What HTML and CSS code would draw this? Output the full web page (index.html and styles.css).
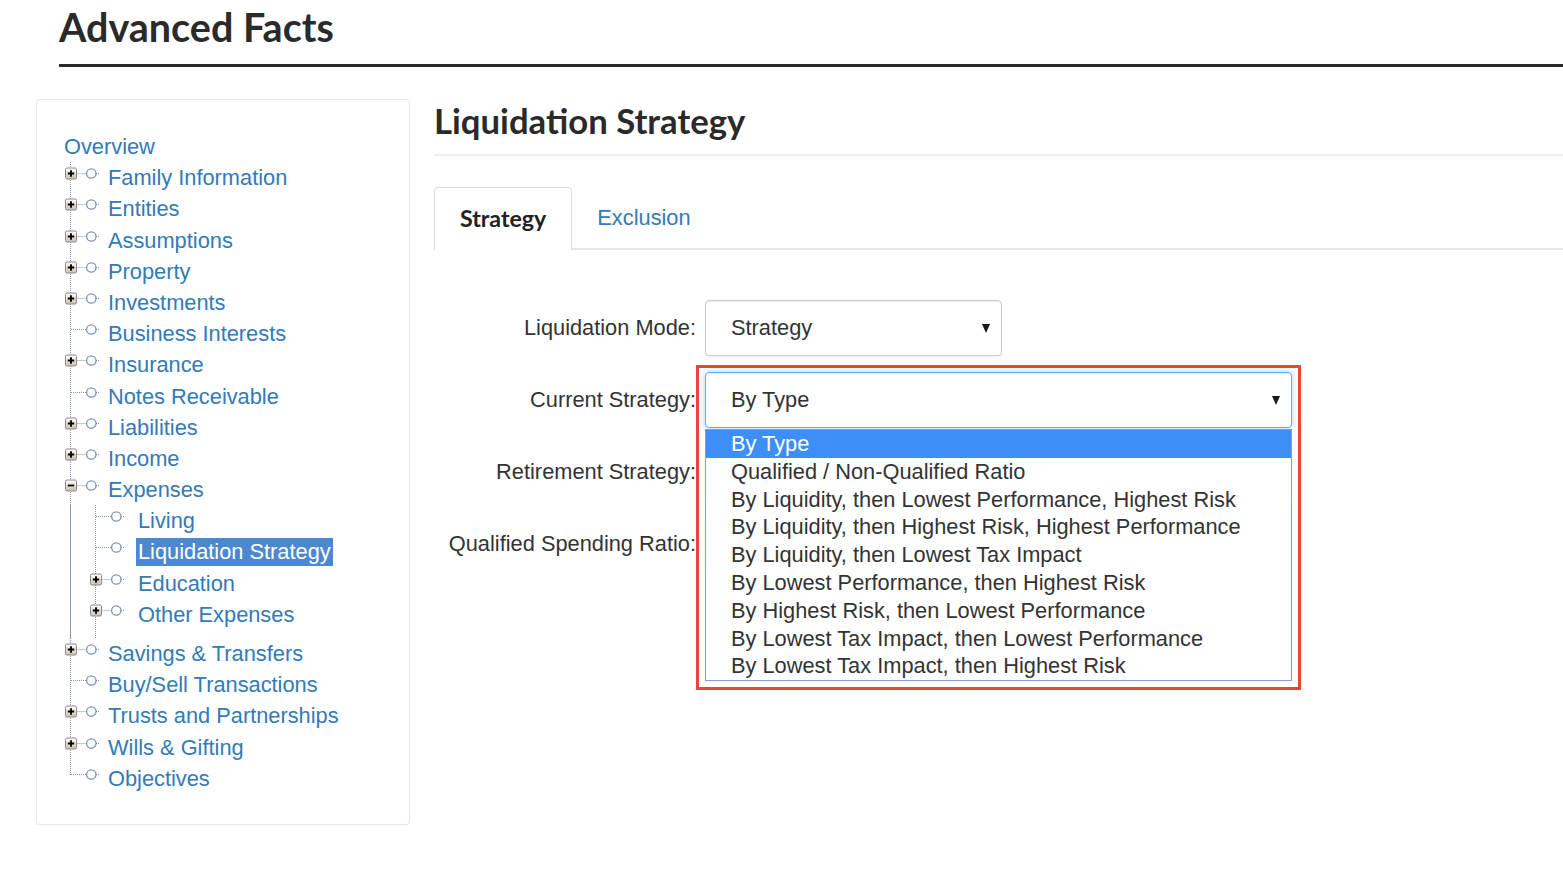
FILE: index.html
```html
<!DOCTYPE html>
<html lang="en">
<head>
  <meta charset="UTF-8" />
  <meta name="viewport" content="width=device-width, initial-scale=1" />
  <title>Advanced Facts - Liquidation Strategy</title>
  <link rel="stylesheet" href="styles.css">
</head>
<body>

<!-- tree glyphs, reused by every row -->
<svg class="defs" width="0" height="0" aria-hidden="true">
  <defs>
    <linearGradient id="box-fill" x1="0" y1="0" x2="0" y2="1">
      <stop offset="0" stop-color="#ffffff"/>
      <stop offset="1" stop-color="#c9c1b1"/>
    </linearGradient>
    <symbol id="t-plus" viewBox="0 0 43 31">
      <line x1="11.5" y1="11.5" x2="21" y2="11.5" class="dots"/>
      <line x1="31" y1="11.5" x2="35" y2="11.5" class="dots"/>
      <rect x="0.5" y="6" width="11" height="11" rx="1.5" fill="url(#box-fill)" stroke="#8a8a8a"/>
      <path d="M2.8 11.5h6.4M6 8.3v6.4" stroke="#000" stroke-width="1.8"/>
      <circle cx="26.3" cy="11.5" r="4.7" fill="#fff" stroke="#7f93b4" stroke-width="1.3"/>
    </symbol>
    <symbol id="t-minus" viewBox="0 0 43 31">
      <line x1="11.5" y1="11.5" x2="21" y2="11.5" class="dots"/>
      <line x1="31" y1="11.5" x2="35" y2="11.5" class="dots"/>
      <rect x="0.5" y="6" width="11" height="11" rx="1.5" fill="url(#box-fill)" stroke="#8a8a8a"/>
      <path d="M2.8 11.5h6.4" stroke="#000" stroke-width="1.8"/>
      <circle cx="26.3" cy="11.5" r="4.7" fill="#fff" stroke="#7f93b4" stroke-width="1.3"/>
    </symbol>
    <symbol id="t-leaf" viewBox="0 0 43 31">
      <line x1="6" y1="11.5" x2="21" y2="11.5" class="dots"/>
      <line x1="31" y1="11.5" x2="35" y2="11.5" class="dots"/>
      <circle cx="26.3" cy="11.5" r="4.7" fill="#fff" stroke="#7f93b4" stroke-width="1.3"/>
    </symbol>
  </defs>
</svg>

<header class="page-header">
  <h1>Advanced Facts</h1>
</header>

<div class="layout">
  <nav class="tree-panel">
    <a class="tree-root" href="#">Overview</a>
    <ul class="tree">
      <li><svg class="twig"><use href="#t-plus"/></svg><a href="#">Family Information</a></li>
      <li><svg class="twig"><use href="#t-plus"/></svg><a href="#">Entities</a></li>
      <li><svg class="twig"><use href="#t-plus"/></svg><a href="#">Assumptions</a></li>
      <li><svg class="twig"><use href="#t-plus"/></svg><a href="#">Property</a></li>
      <li><svg class="twig"><use href="#t-plus"/></svg><a href="#">Investments</a></li>
      <li><svg class="twig"><use href="#t-leaf"/></svg><a href="#">Business Interests</a></li>
      <li><svg class="twig"><use href="#t-plus"/></svg><a href="#">Insurance</a></li>
      <li><svg class="twig"><use href="#t-leaf"/></svg><a href="#">Notes Receivable</a></li>
      <li><svg class="twig"><use href="#t-plus"/></svg><a href="#">Liabilities</a></li>
      <li><svg class="twig"><use href="#t-plus"/></svg><a href="#">Income</a></li>
      <li><svg class="twig"><use href="#t-minus"/></svg><a href="#">Expenses</a></li>
      <li class="branch">
        <ul class="tree sub">
          <li><svg class="twig"><use href="#t-leaf"/></svg><a href="#">Living</a></li>
          <li><svg class="twig"><use href="#t-leaf"/></svg><a class="selected" href="#">Liquidation Strategy</a></li>
          <li><svg class="twig"><use href="#t-plus"/></svg><a href="#">Education</a></li>
          <li><svg class="twig"><use href="#t-plus"/></svg><a href="#">Other Expenses</a></li>
        </ul>
      </li>
      <li><svg class="twig"><use href="#t-plus"/></svg><a href="#">Savings &amp; Transfers</a></li>
      <li><svg class="twig"><use href="#t-leaf"/></svg><a href="#">Buy/Sell Transactions</a></li>
      <li><svg class="twig"><use href="#t-plus"/></svg><a href="#">Trusts and Partnerships</a></li>
      <li><svg class="twig"><use href="#t-plus"/></svg><a href="#">Wills &amp; Gifting</a></li>
      <li><svg class="twig"><use href="#t-leaf"/></svg><a href="#">Objectives</a></li>
    </ul>
  </nav>

  <main class="content">
    <h2 class="section-title">Liquidation Strategy</h2>

    <ul class="tabs">
      <li class="tab active">Strategy</li>
      <li class="tab"><a href="#">Exclusion</a></li>
    </ul>

    <div class="form">
      <label class="form-label">Liquidation Mode:</label>
      <div class="field">
        <div class="select short">Strategy<span class="caret"></span></div>
      </div>

      <label class="form-label">Current Strategy:</label>
      <div class="field">
        <div class="combo">
          <div class="select wide focused">By Type<span class="caret"></span></div>
          <ul class="options">
            <li class="hover">By Type</li>
            <li>Qualified / Non-Qualified Ratio</li>
            <li>By Liquidity, then Lowest Performance, Highest Risk</li>
            <li>By Liquidity, then Highest Risk, Highest Performance</li>
            <li>By Liquidity, then Lowest Tax Impact</li>
            <li>By Lowest Performance, then Highest Risk</li>
            <li>By Highest Risk, then Lowest Performance</li>
            <li>By Lowest Tax Impact, then Lowest Performance</li>
            <li>By Lowest Tax Impact, then Highest Risk</li>
          </ul>
          <div class="callout"></div>
        </div>
      </div>

      <!-- these two selects sit under the open list -->
      <label class="form-label">Retirement Strategy:</label>
      <div class="field">
        <div class="select wide"><span class="caret"></span></div>
      </div>

      <label class="form-label">Qualified Spending Ratio:</label>
      <div class="field">
        <div class="select short"><span class="caret"></span></div>
      </div>
    </div>
  </main>
</div>

</body>
</html>
```

FILE: styles.css
```css
body {
  margin: 0;
  font-family: "Liberation Sans", Arial, sans-serif;
  font-size: 21.8px;
  color: #333;
  background: #fff;
  overflow: hidden;
}
a {
  color: #337ab7;
  text-decoration: none;
}
.defs {
  position: absolute;
}
.dots {
  stroke: #8497b6;
  stroke-width: 1;
  stroke-dasharray: 1 1;
}

/* header */
.page-header {
  margin-left: 59px;
  border-bottom: 3px solid #2b2b2b;
  padding-bottom: 10px;
}
.page-header h1 {
  margin: 0;
  font-family: Lato, "Open Sans", sans-serif;
  font-weight: 700;
  font-size: 39.5px;
  line-height: 54px;
  color: #2a2a2a;
}

.layout {
  display: flex;
  align-items: flex-start;
  gap: 24px;
  padding-left: 36px;
  margin-top: 32px;
}

/* left tree */
.tree-panel {
  width: 345px;
  flex: none;
  border: 1px solid #e6e6e6;
  border-radius: 4px;
  box-shadow: 0 1px 2px rgba(0,0,0,0.06);
  padding: 31px 0 30px 27px;
}
.tree-root {
  display: block;
  line-height: 31.2px;
}
.tree {
  list-style: none;
  margin: 0 0 0 1px;
  padding: 0;
  background: repeating-linear-gradient(to bottom, #8497b6 0 1px, transparent 1px 2px) no-repeat 5px 0 / 1px calc(100% - 19px);
}
.tree li {
  display: flex;
  align-items: flex-start;
  height: 31.2px;
  line-height: 31.2px;
  white-space: nowrap;
}
.tree li.branch {
  display: block;
  height: auto;
}
.tree.sub {
  margin-left: 0;
  padding-left: 25px;
  padding-bottom: 8px;
  background: repeating-linear-gradient(to bottom, #8497b6 0 1px, transparent 1px 2px) no-repeat 30px 0 / 1px 100%,
              repeating-linear-gradient(to bottom, #8497b6 0 1px, transparent 1px 2px) no-repeat 5px 0 / 1px 100%;
}
.twig {
  width: 43px;
  height: 31px;
  flex: none;
}
.tree.sub .twig {
  margin-right: 5px;
}
.tree a.selected {
  background: #4a88d0;
  color: #fff;
  line-height: 28px;
  margin-top: 1.5px;
  padding: 0 2px;
  margin-left: -2px;
}

/* right content */
.content {
  flex: 1;
  min-width: 0;
}
.section-title {
  margin: 0;
  font-family: Lato, "Open Sans", sans-serif;
  font-weight: 700;
  font-size: 34.7px;
  line-height: 44px;
  color: #2a2a2a;
  padding-bottom: 11px;
  border-bottom: 2px solid #eeeeee;
}
.tabs {
  list-style: none;
  margin: 31px 0 0;
  padding: 0;
  display: flex;
  border-bottom: 2px solid #e6e6e6;
}
.tab {
  padding: 0 24px;
  line-height: 60px;
  border: 1px solid transparent;
  border-bottom: 0;
  margin-bottom: -2px;
}
.tab.active {
  font-family: Lato, "Open Sans", sans-serif;
  font-weight: 700;
  font-size: 23.2px;
  color: #222;
  background: #fff;
  border-color: #dddddd;
  border-radius: 4px 4px 0 0;
  padding: 0 25px 2px;
}

/* form */
.form {
  display: grid;
  grid-template-columns: 262px 1fr;
  column-gap: 9px;
  row-gap: 16px;
  margin-top: 50px;
}
.form-label {
  text-align: right;
  line-height: 56px;
  white-space: nowrap;
}
.field {
  height: 56px;
}
.select {
  position: relative;
  height: 56px;
  box-sizing: border-box;
  border: 1px solid #cccccc;
  border-radius: 4px;
  box-shadow: inset 0 1px 1px rgba(0,0,0,0.075), 0 1px 2px rgba(0,0,0,0.08);
  padding-left: 25px;
  line-height: 54px;
  background: #fff;
}
.select.short {
  width: 297px;
}
.select.wide {
  width: 587px;
}
.select.focused {
  border-color: #66afe9;
  box-shadow: inset 0 1px 1px rgba(0,0,0,0.075), 0 0 6px rgba(102,175,233,0.6);
}
.caret {
  position: absolute;
  right: 11px;
  top: 23px;
  width: 0;
  height: 0;
  border-left: 4.5px solid transparent;
  border-right: 4.5px solid transparent;
  border-top: 9px solid #1a1a1a;
}

.combo {
  position: relative;
  width: 587px;
  z-index: 2;
}
.options {
  position: absolute;
  left: 0;
  right: 0;
  top: 100%;
  margin: 1px 0 0;
  padding: 0;
  list-style: none;
  background: #fff;
  border: 1px solid #7f9fd6;
}
.options li {
  height: 27.8px;
  line-height: 27.8px;
  padding-left: 25px;
  color: #333;
  white-space: nowrap;
}
.options li.hover {
  background: #3d8ef6;
  color: #fff;
}
.callout {
  position: absolute;
  left: -9px;
  right: -9px;
  top: -7px;
  height: 325px;
  border: 3px solid #e8453c;
  box-sizing: border-box;
  pointer-events: none;
}
```
